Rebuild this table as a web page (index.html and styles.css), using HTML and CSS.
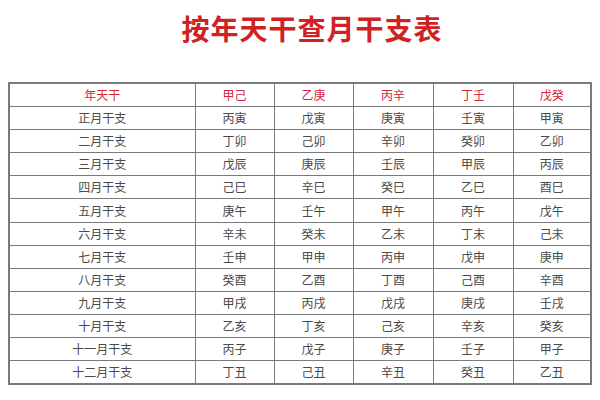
FILE: index.html
```html
<!DOCTYPE html>
<html lang="zh">
<head>
<meta charset="utf-8">
<link rel="stylesheet" href="styles.css">
</head>
<body>
<div class="page">
  <h1 class="title">按年天干查月干支表</h1>
  <table class="ganzhi">
    <colgroup>
      <col class="c0"><col class="c1"><col class="c2"><col class="c3"><col class="c4"><col class="c5">
    </colgroup>
    <thead>
      <tr><th>年天干</th><th>甲己</th><th>乙庚</th><th>丙辛</th><th>丁壬</th><th>戊癸</th></tr>
    </thead>
    <tbody>
      <tr><td>正月干支</td><td>丙寅</td><td>戊寅</td><td>庚寅</td><td>壬寅</td><td>甲寅</td></tr>
      <tr><td>二月干支</td><td>丁卯</td><td>己卯</td><td>辛卯</td><td>癸卯</td><td>乙卯</td></tr>
      <tr><td>三月干支</td><td>戊辰</td><td>庚辰</td><td>壬辰</td><td>甲辰</td><td>丙辰</td></tr>
      <tr><td>四月干支</td><td>己巳</td><td>辛巳</td><td>癸巳</td><td>乙巳</td><td>酉巳</td></tr>
      <tr><td>五月干支</td><td>庚午</td><td>壬午</td><td>甲午</td><td>丙午</td><td>戊午</td></tr>
      <tr><td>六月干支</td><td>辛未</td><td>癸未</td><td>乙未</td><td>丁未</td><td>己未</td></tr>
      <tr><td>七月干支</td><td>壬申</td><td>甲申</td><td>丙申</td><td>戊申</td><td>庚申</td></tr>
      <tr><td>八月干支</td><td>癸酉</td><td>乙酉</td><td>丁酉</td><td>己酉</td><td>辛酉</td></tr>
      <tr><td>九月干支</td><td>甲戌</td><td>丙戌</td><td>戊戌</td><td>庚戌</td><td>壬戌</td></tr>
      <tr><td>十月干支</td><td>乙亥</td><td>丁亥</td><td>己亥</td><td>辛亥</td><td>癸亥</td></tr>
      <tr><td>十一月干支</td><td>丙子</td><td>戊子</td><td>庚子</td><td>壬子</td><td>甲子</td></tr>
      <tr><td>十二月干支</td><td>丁丑</td><td>己丑</td><td>辛丑</td><td>癸丑</td><td>乙丑</td></tr>
    </tbody>
  </table>
</div>
</body>
</html>
```
FILE: styles.css
```css
html, body {
  margin: 0;
  padding: 0;
  background: #ffffff;
}
.page {
  width: 600px;
  height: 400px;
  overflow: hidden;
  font-family: "Noto Sans CJK SC", "Noto Sans", sans-serif;
}
.title {
  margin: 0;
  padding: 10px 0 0 24px;
  height: 72px;
  box-sizing: border-box;
  text-align: center;
  font-size: 28px;
  line-height: 36px;
  font-weight: 700;
  color: #cf2222;
  letter-spacing: 1px;
}
.ganzhi {
  margin: 10px 0 0 8px;
  border-collapse: collapse;
  table-layout: fixed;
  width: 582px;
  border: 2px solid #7a7a7a;
}
.c0 { width: 186px; }
.c1 { width: 79px; }
.c2 { width: 79px; }
.c3 { width: 80px; }
.c4 { width: 80px; }
.c5 { width: 78px; }
.ganzhi th,
.ganzhi td {
  border: 1px solid #7a7a7a;
  height: 22.1px;
  padding: 0;
  text-align: center;
  vertical-align: middle;
  font-size: 12px;
  line-height: 14px;
  font-weight: 400;
}
.ganzhi th {
  color: #d0283e;
}
.ganzhi td {
  color: #4a4a4a;
}
```
